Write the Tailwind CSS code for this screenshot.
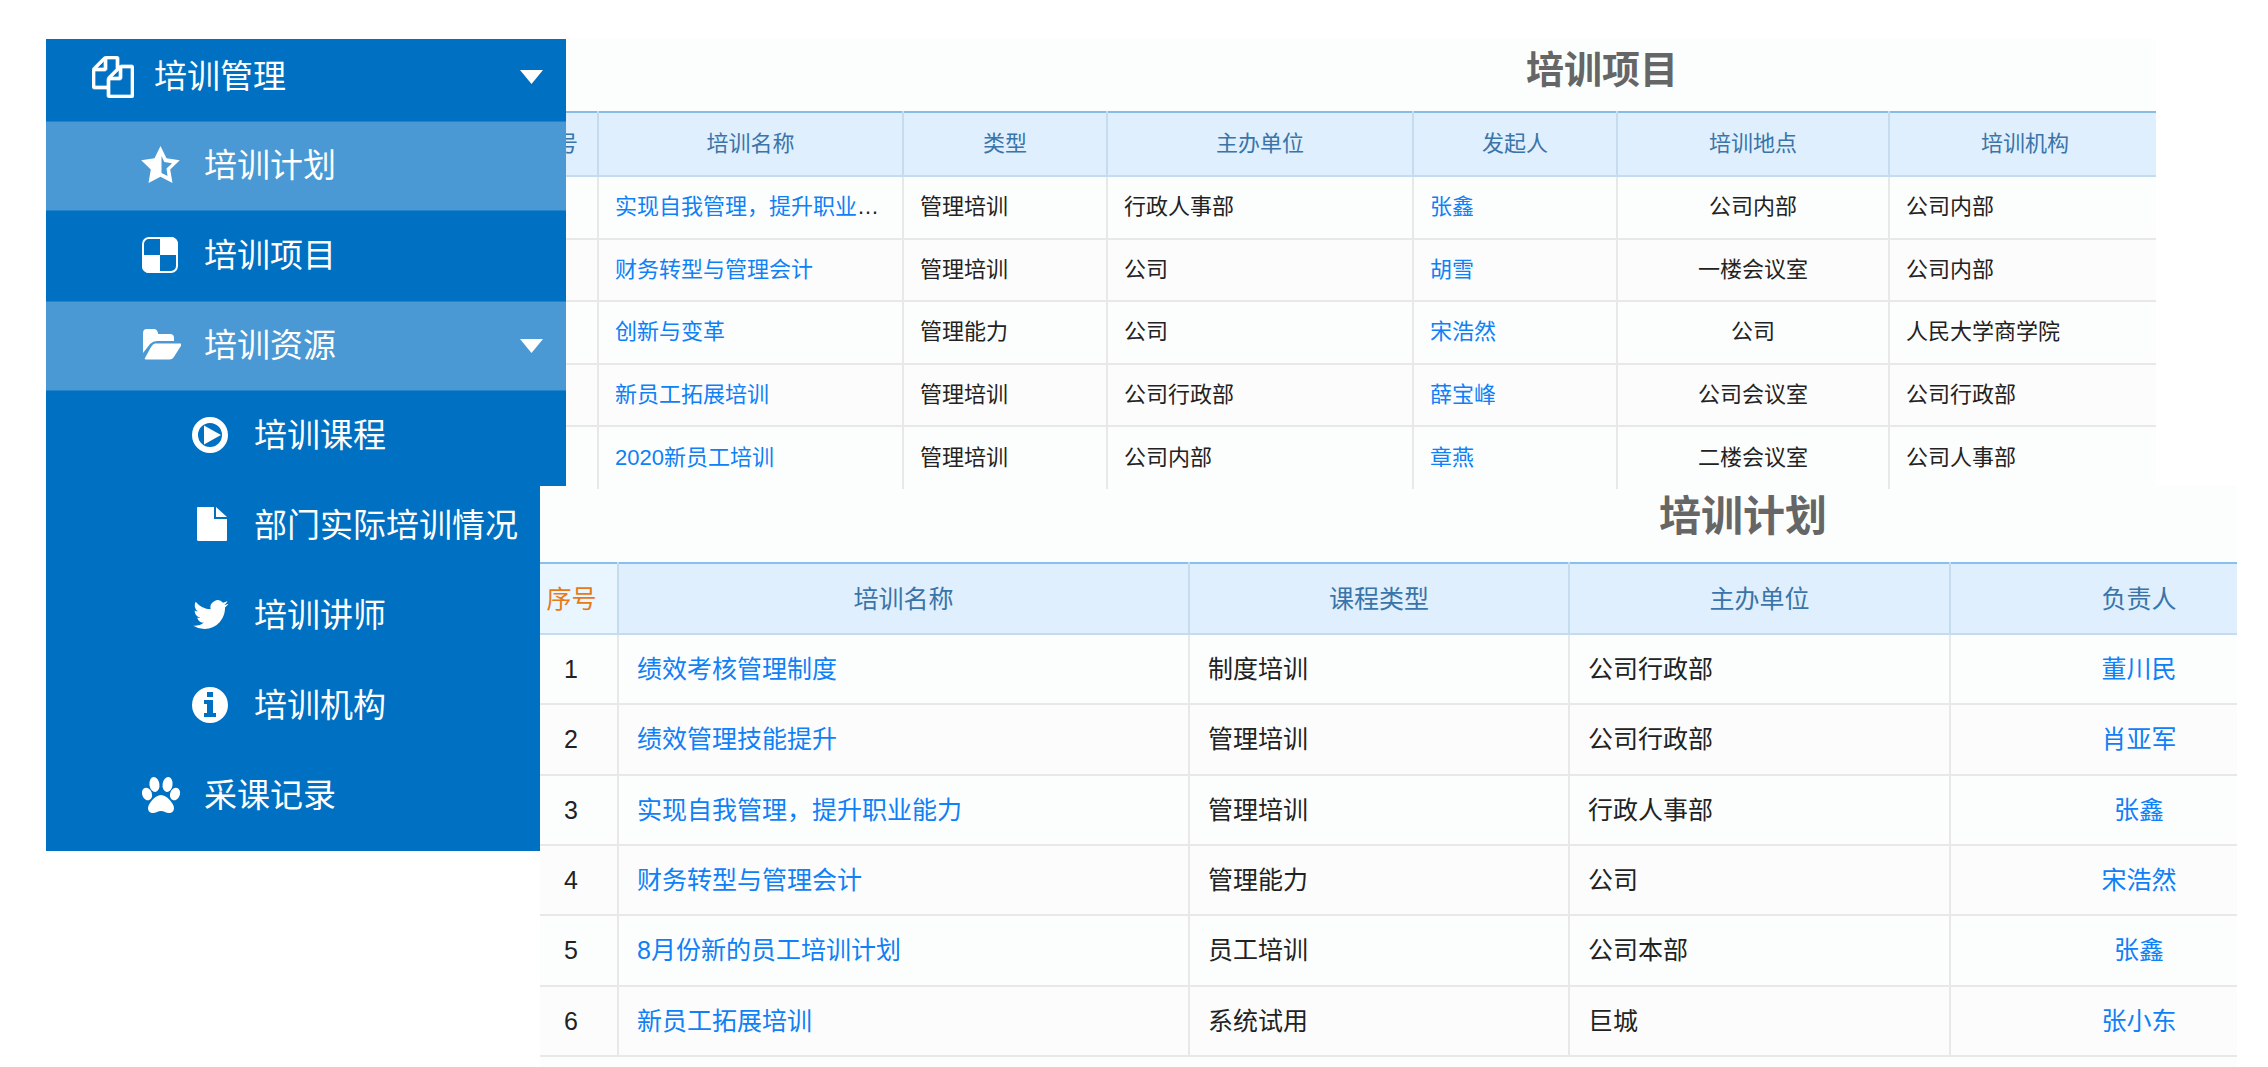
<!DOCTYPE html>
<html lang="zh-CN">
<head>
<meta charset="utf-8">
<title>培训管理</title>
<script src="https://cdn.jsdelivr.net/npm/@tailwindcss/browser@4"></script>
</head>
<body class="bg-white font-['Liberation_Sans','Noto_Sans_CJK_SC',sans-serif] text-[#222]">
<div class="flex min-h-screen items-start overflow-hidden pt-[39px] pl-[46px]">

  <nav aria-label="培训管理" class="w-[520px] shrink-0 bg-[#0070c2] pb-[10px] text-[33px] leading-[40px] text-white">
    <a href="#" class="flex h-[82px] items-center pb-[7px] pl-[46px] pr-[23px]">
      <svg class="mr-[20px] h-[42px] w-[42px]" viewBox="0 0 1792 1792" fill="currentColor" stroke="currentColor" stroke-width="30" aria-hidden="true"><path d="M1696 384q40 0 68 28t28 68v1216q0 40-28 68t-68 28h-960q-40 0-68-28t-28-68v-288h-544q-40 0-68-28t-28-68v-672q0-40 20-88t48-76l408-408q28-28 76-48t88-20h416q40 0 68 28t28 68v328q68-40 128-40h416zm-544 213l-299 299h299v-299zm-640-384l-299 299h299v-299zm196 647l316-316v-416h-384v416q0 40-28 68t-68 28h-416v640h512v-256q0-40 20-88t48-76zm956 804v-1152h-384v416q0 40-28 68t-68 28h-416v640h896z"/></svg>
      <span class="flex-1">培训管理</span>
      <svg class="h-[14px] w-[23px]" viewBox="0 0 23 14" fill="currentColor" aria-hidden="true"><path d="M0 0h23L11.500 14z"/></svg>
    </a>
    <a href="#" class="flex h-[90px] items-center border-y border-[#2384cb] bg-[#4a99d4] pl-[95px]">
      <svg class="mr-[23px] h-[40px] w-[40px]" viewBox="0 0 40 40" fill="currentColor" aria-hidden="true"><path fill-rule="evenodd" d="M19.500 0l6 12.200 13.300 2-9.600 9.400 2.300 13.400-12-6.300L7.500 37l2.300-13.400L.2 14.200l13.300-2zM20.500 10v17l6 3-1-7.400 5.500-5.400-7.700-1.200z"/></svg>
      <span>培训计划</span>
    </a>
    <a href="#" class="flex h-[90px] items-center pl-[95px]">
      <svg class="mr-[23px] h-[40px] w-[40px]" viewBox="0 0 40 40" aria-hidden="true"><rect x="2" y="2" width="34" height="34" rx="6" fill="none" stroke="currentColor" stroke-width="2"/><path fill="currentColor" d="M19 1h11a7 7 0 0 1 7 7v11H19zM1 19h18v18H8a7 7 0 0 1-7-7z"/></svg>
      <span>培训项目</span>
    </a>
    <a href="#" class="flex h-[90px] items-center border-y border-[#2384cb] bg-[#4a99d4] pr-[23px] pl-[95px]">
      <svg class="mr-[23px] h-[40px] w-[40px]" viewBox="0 0 40 40" fill="currentColor" aria-hidden="true"><path d="M2 27V7q0-4 4-4h7q3 0 4 4v1h12q4 0 4 4v3H16q-4 0-7 3z"/><path d="M14 17.500h26q1 0 .5 1.500l-7 11q-2 3.500-5 3.500H5q-2 0-1-1.500l6-11q2-3.500 4-3.500z"/></svg>
      <span class="flex-1">培训资源</span>
      <svg class="h-[14px] w-[23px]" viewBox="0 0 23 14" fill="currentColor" aria-hidden="true"><path d="M0 0h23L11.500 14z"/></svg>
    </a>
    <a href="#" class="flex h-[90px] items-center pl-[145px]">
      <svg class="mr-[23px] h-[40px] w-[40px]" viewBox="0 0 40 40" aria-hidden="true"><circle cx="19" cy="19" r="15" fill="none" stroke="currentColor" stroke-width="6"/><path fill="currentColor" d="M13 9.500v19L30 19z"/></svg>
      <span>培训课程</span>
    </a>
    <a href="#" class="flex h-[90px] items-center pl-[145px]">
      <svg class="mr-[23px] h-[40px] w-[40px]" viewBox="0 0 40 40" fill="currentColor" aria-hidden="true"><path d="M7 1h16v12h13v21q0 1-1 1H8q-2 0-2-1V2q0-1 1-1zM25 1l11 10H25z"/></svg>
      <span class="whitespace-nowrap">部门实际培训情况</span>
    </a>
    <a href="#" class="flex h-[90px] items-center pl-[145px]">
      <svg class="mr-[23px] h-[40px] w-[40px]" viewBox="0 0 24 24" fill="currentColor" aria-hidden="true"><path d="M22.500 4.700a9 9 0 0 1-2.500.7 4.300 4.300 0 0 0 1.900-2.400 8.700 8.700 0 0 1-2.700 1.050 4.300 4.300 0 0 0-7.400 3.900A12.300 12.300 0 0 1 2.800 3.400a4.300 4.300 0 0 0 1.350 5.800 4.300 4.300 0 0 1-1.950-.55v.05a4.300 4.300 0 0 0 3.450 4.250 4.300 4.300 0 0 1-1.950.08 4.300 4.300 0 0 0 4.050 3 8.700 8.700 0 0 1-6.400 1.800A12.300 12.300 0 0 0 8 19.800c8 0 12.400-6.700 12.400-12.400v-.56a8.900 8.900 0 0 0 2.100-2.140z"/></svg>
      <span>培训讲师</span>
    </a>
    <a href="#" class="flex h-[90px] items-center pl-[145px]">
      <svg class="mr-[23px] h-[40px] w-[40px]" viewBox="0 0 40 40" fill="currentColor" aria-hidden="true"><path fill-rule="evenodd" d="M19 1a18 18 0 1 1 0 36 18 18 0 0 1 0-36zM16 6v5h6V6zM13 14v4h3v9h-3v4h12v-4h-3V14z"/></svg>
      <span>培训机构</span>
    </a>
    <a href="#" class="flex h-[90px] items-center pl-[95px]">
      <svg class="mr-[23px] h-[40px] w-[40px]" viewBox="0 0 40 40" fill="currentColor" aria-hidden="true"><ellipse cx="13.500" cy="8.500" rx="5" ry="7.500" transform="rotate(-8 13.500 9)"/><ellipse cx="26.500" cy="8.500" rx="5" ry="7.500" transform="rotate(8 26.500 9)"/><ellipse cx="6" cy="18" rx="4.800" ry="6.500" transform="rotate(-20 6 18)"/><ellipse cx="34" cy="18" rx="4.800" ry="6.500" transform="rotate(20 34 18)"/><path d="M20 19c6 0 13 9 13 13 0 3-2 5-5 5-3 0-5-2-8-2s-5 2-8 2c-3 0-5-2-5-5 0-4 7-13 13-13z"/></svg>
      <span>采课记录</span>
    </a>
  </nav>

  <main class="min-w-0 flex-1">
    <section class="relative z-20 mr-[112px] h-[450px] overflow-hidden bg-[#fcfefe]">
      <h2 class="flex h-[72px] items-center justify-center pb-[10px] pl-[482px] text-[38px] font-bold text-[#666]">培训项目</h2>
      <table class="h-[378px] w-[calc(100%+6px)] table-fixed border-collapse text-[22px] leading-[30px]">
        <colgroup><col class="w-[32px]"><col><col class="w-[204px]"><col class="w-[306px]"><col class="w-[204px]"><col class="w-[272px]"><col class="w-[272px]"></colgroup>
        <thead>
          <tr class="h-[64px] border-t-2 border-b-2 border-t-[#87bce6] border-b-[#c5dcef] bg-[#dfeffd] text-[#3a74a8] *:border-r-2 *:border-[#c5dcef] *:p-0 *:font-normal">
            <th scope="col"><span class="flex justify-end overflow-hidden pr-[19px] whitespace-nowrap">序号</span></th><th scope="col">培训名称</th><th scope="col">类型</th><th scope="col">主办单位</th><th scope="col">发起人</th><th scope="col">培训地点</th><th scope="col">培训机构</th>
          </tr>
        </thead>
        <tbody class="*:h-[62px] *:border-b-2 *:border-[#e8e8e8] *:last:border-b-0 *:even:bg-[#fcfcfc] **:[td]:truncate **:[td]:border-r-2 **:[td]:border-[#e8e8e8] **:[td]:px-[16px] **:[a]:text-[#0f80f5]">
          <tr><td></td><td><a href="#">实现自我管理，提升职业能力</a></td><td>管理培训</td><td>行政人事部</td><td><a href="#">张鑫</a></td><td class="text-center">公司内部</td><td>公司内部</td></tr>
          <tr><td></td><td><a href="#">财务转型与管理会计</a></td><td>管理培训</td><td>公司</td><td><a href="#">胡雪</a></td><td class="text-center">一楼会议室</td><td>公司内部</td></tr>
          <tr><td></td><td><a href="#">创新与变革</a></td><td>管理能力</td><td>公司</td><td><a href="#">宋浩然</a></td><td class="text-center">公司</td><td>人民大学商学院</td></tr>
          <tr><td></td><td><a href="#">新员工拓展培训</a></td><td>管理培训</td><td>公司行政部</td><td><a href="#">薛宝峰</a></td><td class="text-center">公司会议室</td><td>公司行政部</td></tr>
          <tr><td></td><td><a href="#">2020新员工培训</a></td><td>管理培训</td><td>公司内部</td><td><a href="#">章燕</a></td><td class="text-center">二楼会议室</td><td>公司人事部</td></tr>
        </tbody>
      </table>
    </section>

    <section class="relative z-10 -mt-[3px] mr-[31px] -ml-[26px] overflow-hidden bg-[#fcfefe] pb-[10px]">
      <h2 class="flex h-[76px] items-center justify-center pb-[16px] pl-[709px] text-[42px] font-bold text-[#666]">培训计划</h2>
      <table class="h-[495px] w-[calc(100%+92px)] table-fixed border-collapse text-[25px] leading-[34px]">
        <colgroup><col class="w-[78px]"><col><col class="w-[380px]"><col class="w-[381px]"><col class="w-[378px]"></colgroup>
        <thead>
          <tr class="h-[71px] border-t-2 border-b-2 border-t-[#87bfee] border-b-[#c5dcef] bg-[#dfeffd] text-[#3a74a8] *:border-r-2 *:border-[#c5dcef] *:p-0 *:font-normal">
            <th scope="col" class="bg-[#e9f5ff] text-[#e67a17]"><span class="block pr-[14px]">序号</span></th><th scope="col">培训名称</th><th scope="col">课程类型</th><th scope="col">主办单位</th><th scope="col">负责人</th>
          </tr>
        </thead>
        <tbody class="*:h-[70px] *:border-b-2 *:border-[#e8e8e8] *:even:bg-[#fcfcfc] **:[td]:border-r-2 **:[td]:border-[#e8e8e8] **:[td]:pl-[18px] **:[a]:text-[#0f80f5]">
          <tr><td><span class="block pl-[6px]">1</span></td><td><a href="#">绩效考核管理制度</a></td><td>制度培训</td><td>公司行政部</td><td class="pr-[18px] text-center"><a href="#">董川民</a></td></tr>
          <tr><td><span class="block pl-[6px]">2</span></td><td><a href="#">绩效管理技能提升</a></td><td>管理培训</td><td>公司行政部</td><td class="pr-[18px] text-center"><a href="#">肖亚军</a></td></tr>
          <tr><td><span class="block pl-[6px]">3</span></td><td><a href="#">实现自我管理，提升职业能力</a></td><td>管理培训</td><td>行政人事部</td><td class="pr-[18px] text-center"><a href="#">张鑫</a></td></tr>
          <tr><td><span class="block pl-[6px]">4</span></td><td><a href="#">财务转型与管理会计</a></td><td>管理能力</td><td>公司</td><td class="pr-[18px] text-center"><a href="#">宋浩然</a></td></tr>
          <tr><td><span class="block pl-[6px]">5</span></td><td><a href="#">8月份新的员工培训计划</a></td><td>员工培训</td><td>公司本部</td><td class="pr-[18px] text-center"><a href="#">张鑫</a></td></tr>
          <tr><td><span class="block pl-[6px]">6</span></td><td><a href="#">新员工拓展培训</a></td><td>系统试用</td><td>巨城</td><td class="pr-[18px] text-center"><a href="#">张小东</a></td></tr>
        </tbody>
      </table>
    </section>
  </main>
</div>
</body>
</html>
